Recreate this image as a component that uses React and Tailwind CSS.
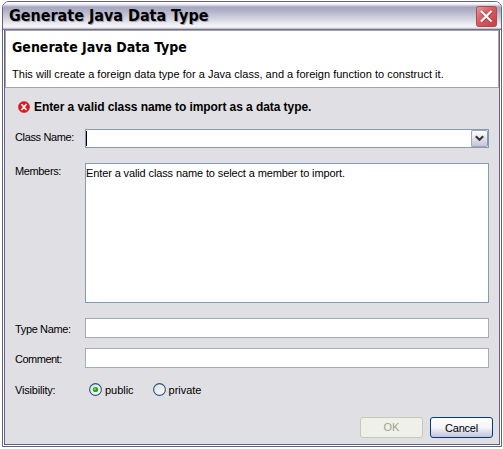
import React from "react";

function Field({ label, children, className, labelClass = "pt-px tracking-[-0.36px]" }) {
  return (
    <div className={`flex ${className}`}>
      <div className={`w-[70px] shrink-0 whitespace-nowrap ${labelClass}`}>{label}</div>
      {children}
    </div>
  );
}

function Radio({ checked, label }) {
  return (
    <label className="flex items-center">
      <svg width="13" height="13" viewBox="0 0 13 13" className="mr-[3px] shrink-0">
        <defs>
          <linearGradient id="radioFill" x1="0" y1="0" x2="1" y2="1">
            <stop offset="0" stopColor="#dcdcd7" />
            <stop offset="1" stopColor="#ffffff" />
          </linearGradient>
        </defs>
        <circle cx="6.5" cy="6.5" r="5.9" fill="url(#radioFill)" stroke="#28567f" strokeWidth="1.1" />
        {checked && <circle cx="6.5" cy="6.5" r="2.6" fill="#22a322" />}
        {checked && <rect x="5" y="5" width="2" height="2" fill="#55d551" />}
      </svg>
      <span className="tracking-[-0.03px]">{label}</span>
    </label>
  );
}

export default function App() {
  return (
    <div className="h-[449px] w-[503px] overflow-hidden bg-white pl-[2px] pt-px font-['Liberation_Sans',Arial,sans-serif] text-[11px] leading-[14px] text-black">
      <div className="h-[446px] w-[500px] rounded-t-[7px] border border-[#636184] bg-white">
        <div className="flex h-[444px] w-[498px] flex-col">
          <div className="flex h-[28px] shrink-0 items-start justify-between rounded-t-[6px] border-b border-[#737187] bg-[linear-gradient(180deg,#ffffff_0px,#f4f4f8_2px,#a5a5bf_5px,#b2b2c8_9px,#d0d0dd_16px,#ececf2_22px,#f7f7fa_25px,#b5b5c6_27px)] pl-[6px] pr-[4px] pt-[4px]">
            <h1 className="mt-[1px] whitespace-nowrap font-['DejaVu_Sans_Condensed','DejaVu_Sans',sans-serif] text-[16px] font-bold leading-[18px] tracking-[-0.02px] [text-shadow:1px_1px_0_#a3a3b4]">Generate Java Data Type</h1>
            <svg width="21" height="21" viewBox="0 0 21 21" className="shrink-0">
              <defs>
                <linearGradient id="closeFill" x1="0" y1="0" x2="1" y2="1">
                  <stop offset="0" stopColor="#e69a9c" />
                  <stop offset="0.45" stopColor="#d65c60" />
                  <stop offset="1" stopColor="#c23e45" />
                </linearGradient>
              </defs>
              <rect x="0.5" y="0.5" width="20" height="20" rx="2" fill="url(#closeFill)" stroke="#a94a54" />
              <path d="M5.5 5.5L15.5 15.5M15.5 5.5L5.5 15.5" stroke="#a8343a" strokeWidth="3.6" />
              <path d="M5 5L15.5 15.5M15.5 5L5 15.5" stroke="#fff" strokeWidth="2.3" />
            </svg>
          </div>
          <div className="mx-px mb-px flex grow flex-col border-x border-b border-[#636184] bg-[#e0dfe3]">
            <div className="h-[58px] border border-[#a5a5a5] bg-white pl-[6px] pt-[8px]">
              <h2 className="whitespace-nowrap font-['DejaVu_Sans_Condensed','DejaVu_Sans',sans-serif] text-[14px] font-bold leading-[16px]">Generate Java Data Type</h2>
              <p className="mt-[12px] whitespace-nowrap tracking-[0.02px]">This will create a foreign data type for a Java class, and a foreign function to construct it.</p>
            </div>
            <div className="flex items-center pl-[13px] pt-[12px]">
              <svg width="12" height="12" viewBox="0 0 12 12" className="mr-[4px]">
                <circle cx="6" cy="6" r="5.6" fill="#e8101a" stroke="#b04048" strokeWidth="0.6" />
                <path d="M3.5 3.2L8.5 9M8.5 3L3.5 9" stroke="#fff" strokeWidth="1.7" />
              </svg>
              <span className="whitespace-nowrap text-[12px] font-bold leading-[14px] tracking-[-0.07px]">Enter a valid class name to import as a data type.</span>
            </div>
            <div className="pl-[10px]">
              <Field label="Class Name:" className="mt-[15px]">
                <div className="flex h-[19px] w-[404px] justify-end border border-[#829bb5] bg-white">
                  <div className="my-[1px] mr-auto w-px bg-black" />
                  <div className="flex h-[17px] w-[17px] items-center justify-center rounded-[2px] border border-[#a7a6b7] border-r-[#829bb5] bg-linear-to-b from-white to-[#c6c5d7]">
                    <svg width="9" height="7" viewBox="0 0 9 7">
                      <path d="M0.8 1.2L4.5 4.7L8.2 1.2" fill="none" stroke="#353535" strokeWidth="2.2" />
                    </svg>
                  </div>
                </div>
              </Field>
              <Field label="Members:" className="mt-[15px]">
                <div className="h-[140px] w-[404px] whitespace-nowrap border border-[#7f9db9] bg-white pt-[2px] tracking-[-0.12px]">Enter a valid class name to select a member to import.</div>
              </Field>
              <Field label="Type Name:" className="mt-[15px]" labelClass="pt-[4px] tracking-[-0.36px]">
                <div className="h-[20px] w-[404px] border border-[#a5acb2] bg-white" />
              </Field>
              <Field label="Comment:" className="mt-[10px]" labelClass="pt-[4px] tracking-[-0.5px]">
                <div className="h-[20px] w-[404px] border border-[#a5acb2] bg-white" />
              </Field>
              <Field label="Visibility:" className="mt-[14px]" labelClass="pt-px tracking-[-0.2px]">
                <div className="flex gap-[19px] pl-[4px]">
                  <Radio checked label="public" />
                  <Radio label="private" />
                </div>
              </Field>
            </div>
            <div className="mb-[6px] mr-[6px] mt-auto flex justify-end gap-[7px]">
              <button className="h-[21px] w-[63px] rounded-[3px] border border-[#c9c7ba] bg-[#f0f0ea] pb-[2px] text-[#a1a192]">OK</button>
              <button className="h-[21px] w-[63px] rounded-[3px] border border-[#003c74] bg-linear-to-b from-white via-[#f4f4fa] to-[#c5c4dc] tracking-[-0.2px]">Cancel</button>
            </div>
          </div>
        </div>
      </div>
    </div>
  );
}
